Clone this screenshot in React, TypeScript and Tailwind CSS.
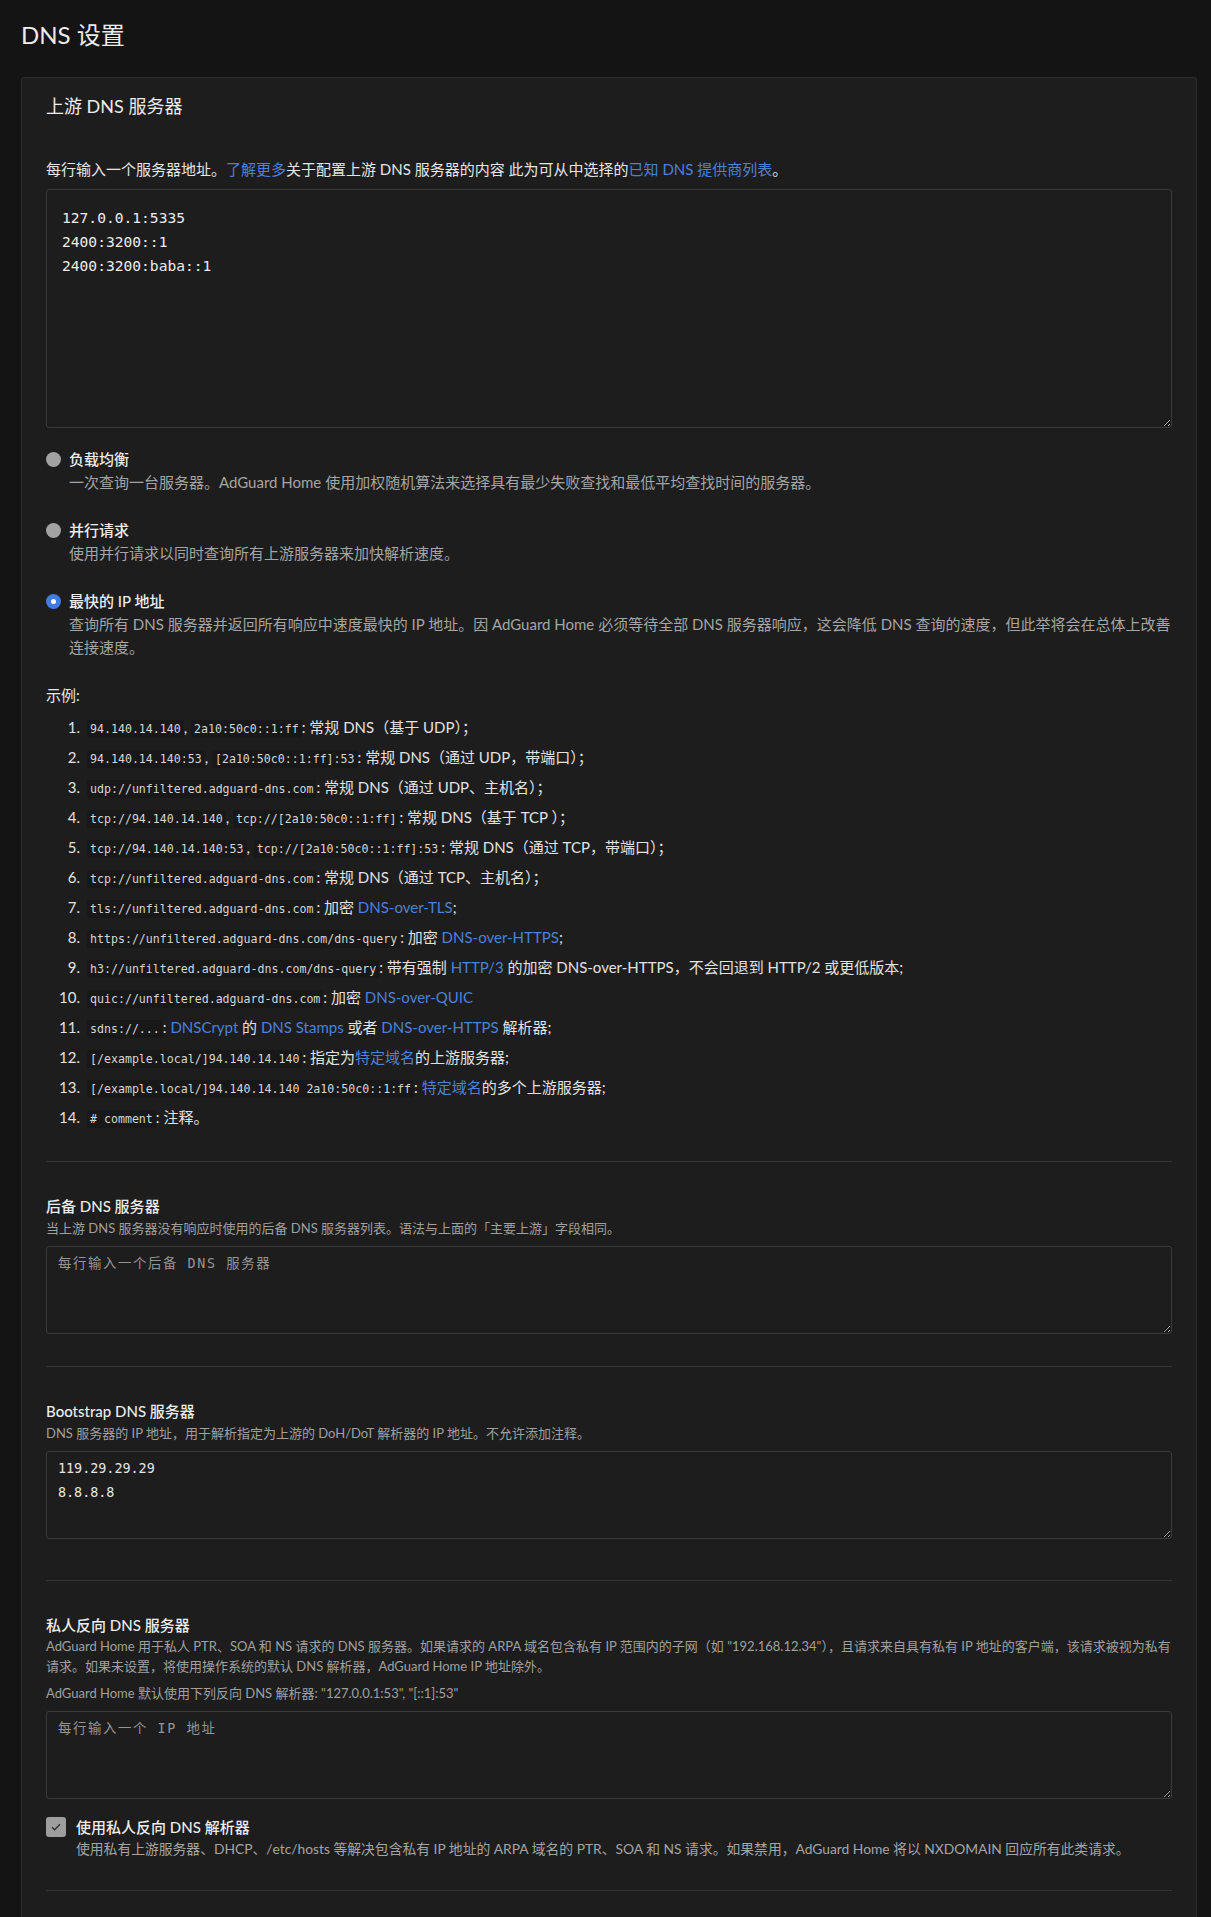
import type { ReactNode } from 'react'

const sans = "font-['Lato','Noto_Sans_CJK_SC',sans-serif]"
const mono = "font-['DejaVu_Sans_Mono','Noto_Sans_CJK_SC',monospace]"

function Code({ children }: { children: ReactNode }) {
  return (
    <code className={`${mono} rounded-[2px] bg-[#181818] px-[3px] py-[2px] text-[11.6px] text-[#d6d6d6]`}>
      {children}
    </code>
  )
}

function Link({ children }: { children: ReactNode }) {
  return <a className="cursor-pointer text-[#4a82dc]">{children}</a>
}

const examples: ReactNode[] = [
  <>
    <Code>94.140.14.140</Code>, <Code>2a10:50c0::1:ff</Code>: 常规 DNS（基于 UDP）；
  </>,
  <>
    <Code>94.140.14.140:53</Code>, <Code>[2a10:50c0::1:ff]:53</Code>: 常规 DNS（通过 UDP，带端口）；
  </>,
  <>
    <Code>udp://unfiltered.adguard-dns.com</Code>: 常规 DNS（通过 UDP、主机名）；
  </>,
  <>
    <Code>tcp://94.140.14.140</Code>, <Code>tcp://[2a10:50c0::1:ff]</Code>: 常规 DNS（基于 TCP ）；
  </>,
  <>
    <Code>tcp://94.140.14.140:53</Code>, <Code>tcp://[2a10:50c0::1:ff]:53</Code>: 常规 DNS（通过 TCP，带端口）；
  </>,
  <>
    <Code>tcp://unfiltered.adguard-dns.com</Code>: 常规 DNS（通过 TCP、主机名）；
  </>,
  <>
    <Code>tls://unfiltered.adguard-dns.com</Code>: 加密 <Link>DNS-over-TLS</Link>;
  </>,
  <>
    <Code>https://unfiltered.adguard-dns.com/dns-query</Code>: 加密 <Link>DNS-over-HTTPS</Link>;
  </>,
  <>
    <Code>h3://unfiltered.adguard-dns.com/dns-query</Code>: 带有强制 <Link>HTTP/3</Link> 的加密 DNS-over-HTTPS，不会回退到 HTTP/2 或更低版本;
  </>,
  <>
    <Code>quic://unfiltered.adguard-dns.com</Code>: 加密 <Link>DNS-over-QUIC</Link>
  </>,
  <>
    <Code>sdns://...</Code>: <Link>DNSCrypt</Link> 的 <Link>DNS Stamps</Link> 或者 <Link>DNS-over-HTTPS</Link> 解析器;
  </>,
  <>
    <Code>[/example.local/]94.140.14.140</Code>: 指定为<Link>特定域名</Link>的上游服务器;
  </>,
  <>
    <Code>[/example.local/]94.140.14.140 2a10:50c0::1:ff</Code>: <Link>特定域名</Link>的多个上游服务器;
  </>,
  <>
    <Code># comment</Code>: 注释。
  </>,
]

function Radio({ checked, label, children }: { checked?: boolean; label: string; children: ReactNode }) {
  return (
    <div className="mb-[25px]">
      <div className="flex items-center gap-2">
        {checked ? (
          <span className="flex h-[15px] w-[15px] items-center justify-center rounded-full bg-[#3f7be0]">
            <span className="h-[5px] w-[5px] rounded-full bg-white" />
          </span>
        ) : (
          <span className="h-[15px] w-[15px] rounded-full bg-[#a2a2a2]" />
        )}
        <span className="text-[15px] leading-[23px] font-medium text-[#ececec]">{label}</span>
      </div>
      <div className="pl-[23px] text-[15px] leading-[23px] text-[#a5a5a5]">{children}</div>
    </div>
  )
}

function Section({ title, children }: { title: string; children: ReactNode }) {
  return (
    <div className="mt-[33px]">
      <div className="text-[15px] leading-[23px] font-medium text-[#ececec]">{title}</div>
      {children}
    </div>
  )
}

const smallArea = `${mono} mt-2 block h-[88px] w-full rounded-[3px] border border-[#3a3a3a] bg-[#1d1d1d] px-[11px] pt-[5px] text-[13.4px] leading-[24px] text-[#e6e6e6] outline-none placeholder:tracking-[1.6px] placeholder:text-[#959595]`

export default function App() {
  return (
    <div className={`${sans} min-h-[1917px] bg-[#141414] pt-[19px] pr-[14px] pl-[21px] text-[#e0e0e0]`}>
      <h1 className="text-[24px] leading-[32px] text-[#ececec]">DNS 设置</h1>

      <div className="mt-[26px] rounded-[3px] border border-[#2e2e2e] bg-[#1d1d1d]">
        <div className="px-6 pt-[14px] text-[18px] leading-[28px] text-[#ececec]">上游 DNS 服务器</div>

        <div className="px-6 pt-[38px] pb-[60px]">
          <p className="text-[15px] leading-[23px] text-[#e6e6e6]">
            每行输入一个服务器地址。<Link>了解更多</Link>关于配置上游 DNS 服务器的内容 此为可从中选择的
            <Link>已知 DNS 提供商列表</Link>。
          </p>
          <textarea
            className={`${mono} mt-2 block h-[239px] w-full rounded-[3px] border border-[#3a3a3a] bg-[#1d1d1d] px-[15px] pt-4 text-[14.6px] leading-[24px] text-[#ececec] outline-none`}
            defaultValue={'127.0.0.1:5335\n2400:3200::1\n2400:3200:baba::1'}
          />

          <div className="mt-5">
            <Radio label="负载均衡">
              一次查询一台服务器。AdGuard Home 使用加权随机算法来选择具有最少失败查找和最低平均查找时间的服务器。
            </Radio>
            <Radio label="并行请求">使用并行请求以同时查询所有上游服务器来加快解析速度。</Radio>
            <Radio checked label="最快的 IP 地址">
              <span className="block whitespace-nowrap">
                查询所有 DNS 服务器并返回所有响应中速度最快的 IP 地址。因 AdGuard Home 必须等待全部 DNS 服务器响应，这会降低 DNS 查询的速度，但此举将会在总体上改善
              </span>
              <span className="block">连接速度。</span>
            </Radio>
          </div>

          <div className="text-[15px] leading-[23px] text-[#e6e6e6]">示例:</div>
          <ol className="mt-[5px]">
            {examples.map((item, i) => (
              <li key={i} className="flex h-[30px] items-center gap-[7px] text-[15px] whitespace-nowrap text-[#e2e2e2]">
                <span className="w-[34px] shrink-0 text-right">{i + 1}.</span>
                <span>{item}</span>
              </li>
            ))}
          </ol>

          <hr className="mt-[29px] border-[#343434]" />

          <Section title="后备 DNS 服务器">
            <p className="text-[13px] leading-[20px] text-[#a0a0a0]">
              当上游 DNS 服务器没有响应时使用的后备 DNS 服务器列表。语法与上面的「主要上游」字段相同。
            </p>
            <textarea className={smallArea} placeholder="每行输入一个后备 DNS 服务器" />
          </Section>

          <hr className="mt-[32px] border-[#343434]" />

          <Section title="Bootstrap DNS 服务器">
            <p className="text-[13px] leading-[20px] text-[#a0a0a0]">
              DNS 服务器的 IP 地址，用于解析指定为上游的 DoH/DoT 解析器的 IP 地址。不允许添加注释。
            </p>
            <textarea className={smallArea} defaultValue={'119.29.29.29\n8.8.8.8'} />
          </Section>

          <hr className="mt-[41px] border-[#343434]" />

          <Section title="私人反向 DNS 服务器">
            <p className="text-[13px] leading-[19.5px] text-[#a0a0a0]">
              <span className="block whitespace-nowrap">
                AdGuard Home 用于私人 PTR、SOA 和 NS 请求的 DNS 服务器。如果请求的 ARPA 域名包含私有 IP 范围内的子网（如 "192.168.12.34"），且请求来自具有私有 IP 地址的客户端，该请求被视为私有
              </span>
              <span className="block">请求。如果未设置，将使用操作系统的默认 DNS 解析器，AdGuard Home IP 地址除外。</span>
            </p>
            <p className="mt-[7px] text-[13px] leading-[20px] text-[#a0a0a0]">
              AdGuard Home 默认使用下列反向 DNS 解析器: "127.0.0.1:53", "[::1]:53"
            </p>
            <textarea className={smallArea} placeholder="每行输入一个 IP 地址" />
          </Section>

          <div className="mt-[17px]">
            <div className="flex items-center gap-[10px]">
              <span className="flex h-5 w-5 items-center justify-center rounded-[3px] bg-[#9e9e9e]">
                <svg width="14" height="14" viewBox="0 0 14 14" fill="none">
                  <path d="M3 7.2l2.6 2.6L11 4.2" stroke="#2e2e2e" strokeWidth="1.3" />
                </svg>
              </span>
              <span className="text-[15px] leading-[22px] font-medium text-[#ececec]">使用私人反向 DNS 解析器</span>
            </div>
            <div className="pl-[30px] text-[13.8px] leading-[21px] whitespace-nowrap text-[#a5a5a5]">
              使用私有上游服务器、DHCP、/etc/hosts 等解决包含私有 IP 地址的 ARPA 域名的 PTR、SOA 和 NS 请求。如果禁用，AdGuard Home 将以 NXDOMAIN 回应所有此类请求。
            </div>
          </div>

          <hr className="mt-[31px] border-[#343434]" />
        </div>
      </div>
    </div>
  )
}
